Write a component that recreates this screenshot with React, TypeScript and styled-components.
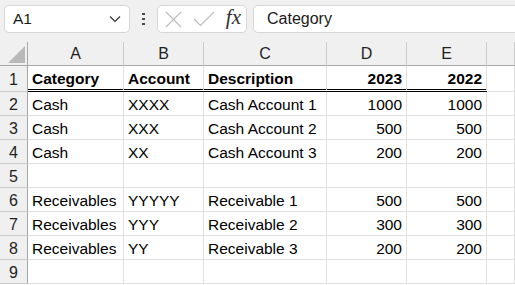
import React from "react";
import styled, { createGlobalStyle } from "styled-components";

const GlobalStyle = createGlobalStyle`
    body {
        margin: 0;
        background: #ffffff;
        font-family: "Liberation Sans", Arial, sans-serif;
        overflow: hidden;
    }
`;

const StyledPage = styled.div`
    width: 515px;
    height: 285px;
    overflow: hidden;
    background: #ffffff;
`;

const StyledToolbar = styled.div`
    height: 42px;
    box-sizing: border-box;
    padding: 5px 0 0 4px;
    background: #f0f0f0;
    display: flex;
    align-items: flex-start;
    margin-right: -30px;
`;

const StyledBox = styled.div`
    height: 28px;
    box-sizing: border-box;
    background: #ffffff;
    border: 1px solid #d6d6d6;
    border-radius: 5px;
    display: flex;
    align-items: center;
`;

const StyledNameBox = styled(StyledBox)`
    width: 126px;
    padding: 0 8px 0 8px;
    justify-content: space-between;
    font-size: 15.5px;
    color: #1a1a1a;
`;

const StyledDots = styled.div`
    width: 27px;
    height: 28px;
    display: flex;
    flex-direction: column;
    align-items: center;
    justify-content: center;
    gap: 2.5px;

    & span {
        width: 2.5px;
        height: 2.5px;
        background: #4a4a4a;
    }
`;

const StyledFxBox = styled(StyledBox)`
    width: 90px;
    padding: 0 5px 0 7px;
    justify-content: space-between;
`;

const StyledFx = styled.span`
    font-family: "Liberation Serif", "Times New Roman", serif;
    font-style: italic;
    font-size: 21px;
    color: #303030;
    margin-top: -3px;
`;

const StyledFormulaBar = styled(StyledBox)`
    flex: 1;
    margin-left: 6px;
    padding-left: 13px;
    font-size: 16px;
    color: #1a1a1a;
`;

const StyledGrid = styled.div`
    display: grid;
    grid-template-columns: 28px 96px 80px 123px 80px 80px 1fr;
    grid-template-rows: 24px 26px;
    grid-auto-rows: 24px;
    font-size: 15.5px;
    color: #000000;
`;

const StyledColHead = styled.div`
    box-sizing: border-box;
    background: #f0f0f0;
    border-right: 1px solid #cbcbcb;
    border-bottom: 1px solid #a8a8a8;
    display: flex;
    align-items: center;
    justify-content: center;
    padding-top: 1px;
    font-size: 16px;
    color: #1f1f1f;
`;

const StyledCorner = styled(StyledColHead)`
    border-right-color: #a8a8a8;
    align-items: flex-end;
    justify-content: flex-end;
    padding: 0 2px 2px 0;
`;

const StyledRowHead = styled.div<{ $double?: boolean }>`
    box-sizing: border-box;
    background: #f0f0f0;
    border-right: 1px solid #a8a8a8;
    border-bottom: 1px solid #cbcbcb;
    text-align: center;
    line-height: 20px;
    padding-top: ${(p) => (p.$double ? 4 : 3)}px;
    font-size: 16px;
    color: #1f1f1f;
`;

const StyledCell = styled.div<{ $num?: boolean; $bold?: boolean; $double?: boolean }>`
    box-sizing: border-box;
    border-right: 1px solid #e0e0e0;
    border-bottom: ${(p) => (p.$double ? "3px double #000000" : "1px solid #e0e0e0")};
    padding: 3px 4px 0 4px;
    line-height: 20px;
    white-space: nowrap;
    overflow: hidden;
    text-align: ${(p) => (p.$num ? "right" : "left")};
    font-weight: ${(p) => (p.$bold ? 700 : 400)};
`;

const columns = ["A", "B", "C", "D", "E", ""];

const rows: (string | number)[][] = [
    ["Category", "Account", "Description", 2023, 2022],
    ["Cash", "XXXX", "Cash Account 1", 1000, 1000],
    ["Cash", "XXX", "Cash Account 2", 500, 500],
    ["Cash", "XX", "Cash Account 3", 200, 200],
    ["", "", "", "", ""],
    ["Receivables", "YYYYY", "Receivable 1", 500, 500],
    ["Receivables", "YYY", "Receivable 2", 300, 300],
    ["Receivables", "YY", "Receivable 3", 200, 200],
    ["", "", "", "", ""],
];

const App = () => {
    return (
        <StyledPage>
            <GlobalStyle />
            <StyledToolbar>
                <StyledNameBox>
                    <span>A1</span>
                    <svg width="12" height="8" viewBox="0 0 12 8">
                        <polyline points="1,1.5 6,6.5 11,1.5" fill="none" stroke="#333" strokeWidth="1.2" />
                    </svg>
                </StyledNameBox>
                <StyledDots>
                    <span />
                    <span />
                    <span />
                </StyledDots>
                <StyledFxBox>
                    <svg width="17" height="17" viewBox="0 0 17 17">
                        <path d="M1 1 L16 16 M16 1 L1 16" stroke="#bcbcbc" strokeWidth="1.1" fill="none" />
                    </svg>
                    <svg width="22" height="16" viewBox="0 0 22 16">
                        <polyline points="1,8 7.5,14.5 21,1" stroke="#bcbcbc" strokeWidth="1.1" fill="none" />
                    </svg>
                    <StyledFx>fx</StyledFx>
                </StyledFxBox>
                <StyledFormulaBar>Category</StyledFormulaBar>
            </StyledToolbar>
            <StyledGrid>
                <StyledCorner>
                    <svg width="17" height="17" viewBox="0 0 17 17">
                        <polygon points="17,0 17,17 0,17" fill="#b9b9b9" />
                    </svg>
                </StyledCorner>
                {columns.map((c, i) => (
                    <StyledColHead key={i}>{c}</StyledColHead>
                ))}
                {rows.map((row, r) => (
                    <React.Fragment key={r}>
                        <StyledRowHead $double={r === 0}>{r + 1}</StyledRowHead>
                        {row.map((v, c) => (
                            <StyledCell key={c} $num={c >= 3} $bold={r === 0} $double={r === 0}>
                                {v}
                            </StyledCell>
                        ))}
                        <StyledCell />
                    </React.Fragment>
                ))}
            </StyledGrid>
        </StyledPage>
    );
};

export default App;
